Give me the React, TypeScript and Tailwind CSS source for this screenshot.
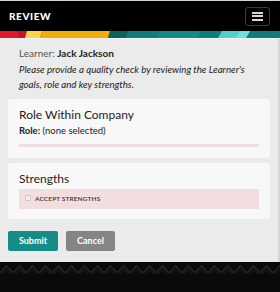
import React from "react";

const font = { fontFamily: "Lato, 'Open Sans', sans-serif" };

function Stripe() {
  return (
    <svg width="280" height="7" viewBox="0 0 280 7" className="block">
      <rect x="0" y="0" width="280" height="7" fill="#0f7d78" />
      <polygon points="0,0 27,0 25,7 0,7" fill="#e3182d" />
      <polygon points="17,0 27,0 25,7 19,7" fill="#c0142a" />
      <polygon points="27,0 42,0 40,7 25,7" fill="#ffd34d" />
      <polygon points="42,0 110,0 108,7 40,7" fill="#f3ad0a" />
      <polygon points="110,0 128,0 126,7 108,7" fill="#0a615d" />
      <polygon points="160,0 200,0 198,7 158,7" fill="#138a84" />
      <polygon points="222,0 250,0 246,7 218,7" fill="#52d0ca" />
      <polygon points="240,0 250,0 246,7 236,7" fill="#6fe0db" />
    </svg>
  );
}

function Zigzag() {
  return (
    <svg width="280" height="11" className="block">
      <defs>
        <pattern id="zz" width="13" height="11" patternUnits="userSpaceOnUse">
          <path d="M0 9 L6.5 2 L13 9" fill="none" stroke="#262626" strokeWidth="1.4" />
          <path d="M2.5 10 L6.5 5.5 L10.5 10" fill="none" stroke="#1c1c1c" strokeWidth="1.1" />
        </pattern>
      </defs>
      <rect width="280" height="11" fill="url(#zz)" />
    </svg>
  );
}

export default function App() {
  return (
    <div className="w-[280px] h-[292px] flex flex-col overflow-hidden bg-[#ebebeb]" style={font}>
      <div className="h-[1px] bg-[#d4d4d4]" />
      <div className="h-[30px] bg-black flex items-center justify-between pl-[9px] pr-[10px]">
        <span className="text-white font-black text-[10px] tracking-[0.06em]">REVIEW</span>
        <button className="w-[25px] h-[19px] border border-[#3d3d3d] rounded-[3px] flex flex-col items-center justify-center gap-[1.5px]">
          <span className="block w-[11px] h-[2px] bg-[#d6d6d6]" />
          <span className="block w-[11px] h-[2px] bg-[#d6d6d6]" />
          <span className="block w-[11px] h-[2px] bg-[#d6d6d6]" />
        </button>
      </div>
      <Stripe />
      <div className="h-[1px] bg-[#f4f4f4]" />
      <div className="flex-1 flex">
        <div className="flex-1 px-[8px] pt-[7px]">
          <div className="px-[11px]">
            <p className="text-[10px] leading-[14px] text-[#555]">
              Learner: <span className="font-bold text-[#1f1f1f]">Jack Jackson</span>
            </p>
            <p className="mt-[2px] text-[9.7px] leading-[15px] italic text-[#222]">
              Please provide a quality check by reviewing the Learner's goals, role and key strengths.
            </p>
          </div>
          <div className="mt-[7px] bg-[#f8f8f8] rounded-[3px] px-[11px] pt-[8px] pb-[11px]">
            <h2 className="text-[12px] leading-[16px] text-[#1d1d1d]">Role Within Company</h2>
            <p className="mt-[1px] text-[9.5px] leading-[14px] text-[#222]">
              <span className="font-bold">Role:</span> (none selected)
            </p>
            <div className="mt-[6px] h-[3px] bg-[#f2dede]" />
          </div>
          <div className="mt-[5px] bg-[#f8f8f8] rounded-[3px] px-[11px] pt-[8px] pb-[10px]">
            <h2 className="text-[12px] leading-[16px] text-[#1d1d1d]">Strengths</h2>
            <div className="mt-[2px] h-[20px] bg-[#f2dede] flex items-center pl-[6px] gap-[4px]">
              <span className="w-[6px] h-[6px] border border-[#cfc6c6] bg-[#eee] rounded-[1px] -mt-[2px]" />
              <span className="text-[6.5px] font-semibold text-[#333] tracking-[0.02em]">ACCEPT STRENGTHS</span>
            </div>
          </div>
          <div className="mt-[12px] flex gap-[8px]">
            <button className="w-[50px] h-[20px] rounded-[2px] bg-[#168c86] text-white text-[9px] font-bold">Submit</button>
            <button className="w-[49px] h-[20px] rounded-[2px] bg-[#858585] text-white text-[9px] font-bold">Cancel</button>
          </div>
        </div>
        <div className="w-[2px] bg-[#d6d6d6]" />
      </div>
      <div className="h-[30px] bg-[#0a0a0a] pt-[2px]">
        <Zigzag />
      </div>
    </div>
  );
}
